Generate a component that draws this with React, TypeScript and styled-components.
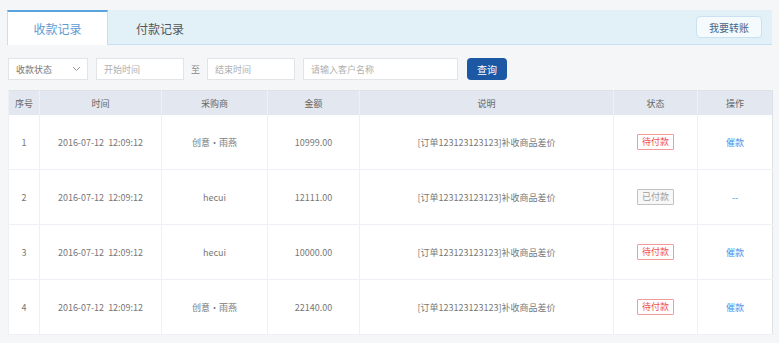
import styled, { createGlobalStyle } from "styled-components";

const GlobalStyle = createGlobalStyle`
  body {
    margin: 0;
    background: #f5f6f7;
    font-family: "Noto Sans CJK SC", "Noto Sans", sans-serif;
  }
`;

type Row = {
  id: number;
  time: string;
  buyer: string;
  amount: string;
  note: string;
  paid: boolean;
};

const rows: Row[] = [
  { id: 1, time: "2016-07-12  12:09:12", buyer: "创意·雨燕", amount: "10999.00", note: "[订单123123123123]补收商品差价", paid: false },
  { id: 2, time: "2016-07-12  12:09:12", buyer: "hecui", amount: "12111.00", note: "[订单123123123123]补收商品差价", paid: true },
  { id: 3, time: "2016-07-12  12:09:12", buyer: "hecui", amount: "10000.00", note: "[订单123123123123]补收商品差价", paid: false },
  { id: 4, time: "2016-07-12  12:09:12", buyer: "创意·雨燕", amount: "22140.00", note: "[订单123123123123]补收商品差价", paid: false },
];

const columns = [
  { title: "序号", width: 31 },
  { title: "时间", width: 122 },
  { title: "采购商", width: 106 },
  { title: "金额", width: 92 },
  { title: "说明", width: 254 },
  { title: "状态", width: 84 },
  { title: "操作", width: 75 },
];

const App = () => {
  return (
    <Page>
      <GlobalStyle />
      <TabBar>
        <Tab $active>收款记录</Tab>
        <Tab>付款记录</Tab>
        <TransferButton>我要转账</TransferButton>
      </TabBar>

      <Filters>
        <Select>
          <span>收款状态</span>
          <svg width="9" height="6" viewBox="0 0 9 6">
            <path d="M1 1l3.5 3.5L8 1" fill="none" stroke="#999" strokeWidth="1" />
          </svg>
        </Select>
        <Input $width={88} placeholder="开始时间" />
        <To>至</To>
        <Input $width={88} placeholder="结束时间" />
        <Input $width={155} placeholder="请输入客户名称" />
        <SearchButton>查询</SearchButton>
      </Filters>

      <Table>
        <colgroup>
          {columns.map((c) => (
            <col key={c.title} style={{ width: c.width }} />
          ))}
        </colgroup>
        <thead>
          <tr>
            {columns.map((c) => (
              <Th key={c.title}>{c.title}</Th>
            ))}
          </tr>
        </thead>
        <tbody>
          {rows.map((r) => (
            <tr key={r.id}>
              <Td>{r.id}</Td>
              <Td>{r.time}</Td>
              <Td>{r.buyer}</Td>
              <Td>{r.amount}</Td>
              <Td>{r.note}</Td>
              <Td>
                <Badge $paid={r.paid}>{r.paid ? "已付款" : "待付款"}</Badge>
              </Td>
              <Td>
                <Action>{r.paid ? "--" : "催款"}</Action>
              </Td>
            </tr>
          ))}
        </tbody>
      </Table>
    </Page>
  );
};

const Page = styled.div`
  padding: 10px 7px 0 8px;
`;

const TabBar = styled.div`
  display: flex;
  align-items: stretch;
  height: 34px;
  margin-left: -1px;
  background: #e2f1f8;
  border-bottom: 1px solid #c5e1f1;
`;

const Tab = styled.div<{ $active?: boolean }>`
  display: flex;
  align-items: center;
  justify-content: center;
  width: ${(p) => (p.$active ? 101 : 104)}px;
  box-sizing: border-box;
  font-size: 12px;
  color: ${(p) => (p.$active ? "#5b9bd3" : "#555")};
  background: ${(p) => (p.$active ? "#fff" : "transparent")};
  border-top: 2px solid ${(p) => (p.$active ? "#5ba3dc" : "transparent")};
  border-left: 1px solid ${(p) => (p.$active ? "#c5e1f1" : "transparent")};
  border-right: 1px solid ${(p) => (p.$active ? "#c5e1f1" : "transparent")};
  margin-bottom: ${(p) => (p.$active ? "-1px" : "0")};
`;

const TransferButton = styled.button`
  margin: 6px 10px 0 auto;
  align-self: flex-start;
  width: 66px;
  height: 22px;
  padding: 0;
  background: #f5fafd;
  border: 1px solid #c9e1f1;
  border-radius: 4px;
  font-family: inherit;
  font-size: 10px;
  color: #46648a;
`;

const Filters = styled.div`
  display: flex;
  align-items: center;
  gap: 8px;
  margin-top: 13px;
  height: 22px;
`;

const Select = styled.div`
  display: flex;
  align-items: center;
  justify-content: space-between;
  box-sizing: border-box;
  width: 80px;
  height: 22px;
  padding: 0 6px 0 7px;
  background: #fff;
  border: 1px solid #e2e4e8;
  font-size: 9px;
  color: #777;
`;

const Input = styled.input<{ $width: number }>`
  box-sizing: border-box;
  width: ${(p) => p.$width}px;
  height: 22px;
  padding: 0 7px;
  background: #fff;
  border: 1px solid #e2e4e8;
  outline: none;
  font-family: inherit;
  font-size: 9px;

  &::placeholder {
    color: #b0b0b0;
  }
`;

const To = styled.span`
  font-size: 9px;
  color: #888;
  margin: 0 -1px;
`;

const SearchButton = styled.button`
  margin-left: 1px;
  width: 40px;
  height: 22px;
  padding: 0;
  background: #1c58a4;
  border: none;
  border-radius: 4px;
  font-family: inherit;
  font-size: 10px;
  color: #fff;
`;

const Table = styled.table`
  margin-top: 10px;
  width: 764px;
  table-layout: fixed;
  border-collapse: collapse;
  background: #fff;
  border: 1px solid #dde1e8;
  font-size: 9px;
`;

const Th = styled.th`
  height: 24px;
  padding: 0;
  background: #e3e7ef;
  font-weight: normal;
  color: #666;
  border-left: 1px solid #eef0f5;
`;

const Td = styled.td`
  height: 54px;
  padding: 0;
  text-align: center;
  white-space: pre;
  color: #777;
  border-left: 1px solid #eef0f5;
  border-bottom: 1px solid #eef0f5;
`;

const Badge = styled.span<{ $paid: boolean }>`
  display: inline-block;
  padding: 1px 4px;
  line-height: 12px;
  font-size: 9px;
  border: 1px solid ${(p) => (p.$paid ? "#c2c2c2" : "#f29b9b")};
  color: ${(p) => (p.$paid ? "#a0a0a0" : "#f0504f")};
  background: ${(p) => (p.$paid ? "#f7f7f7" : "#fff")};
  border-radius: 1px;
`;

const Action = styled.span`
  color: #4a8df0;
  font-size: 9px;
`;

export default App;
